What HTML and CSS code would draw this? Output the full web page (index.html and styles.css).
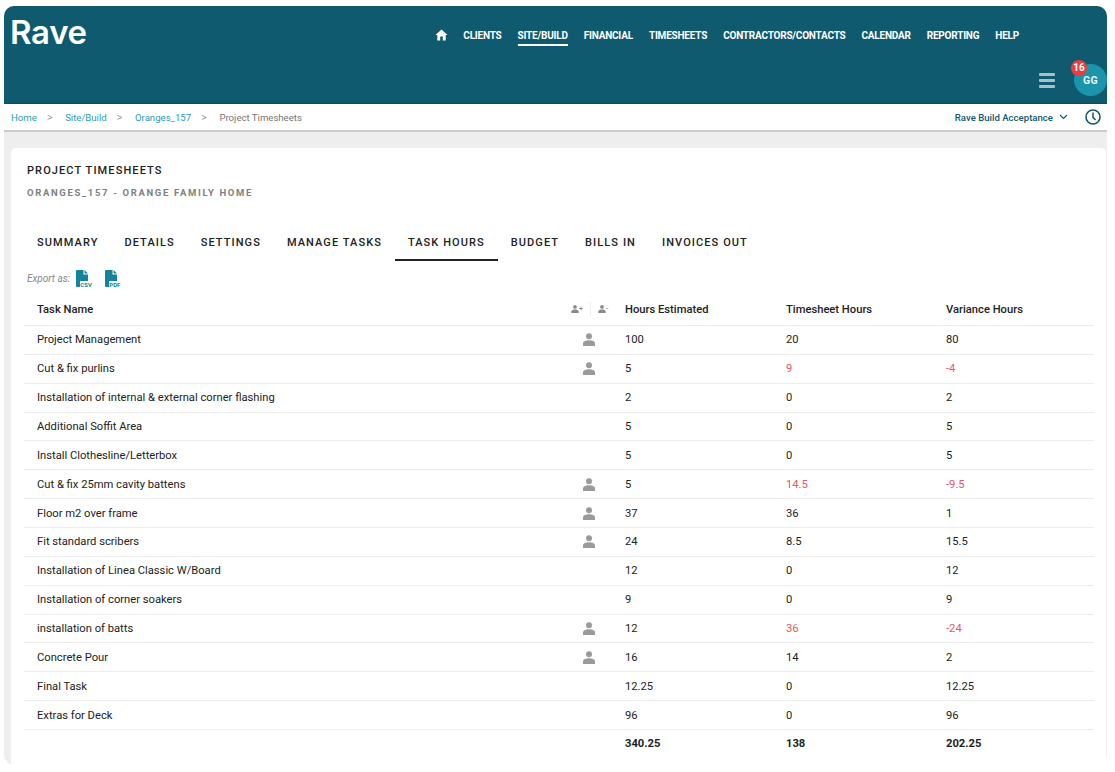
FILE: index.html
```html
<!DOCTYPE html>
<html lang="en">
<head>
    <meta charset="UTF-8">
    <meta name="viewport" content="width=device-width, initial-scale=1.0">
    <title>Project Timesheets</title>
    <link rel="stylesheet" href="styles.css">
</head>
<body>
    <div class="frame">
        <header class="topbar">
            <div class="logo">Rave</div>
            <nav class="main-nav">
                <a class="nav-home" href="#">
                    <svg width="13" height="12" viewBox="0 0 13 12"><path d="M6.5 0.5 L0.5 6 H2.3 V11.5 H5.2 V7.6 H7.8 V11.5 H10.7 V6 H12.5 Z" fill="#fff"/></svg>
                </a>
                <a href="#">CLIENTS</a>
                <a class="active" href="#">SITE/BUILD</a>
                <a href="#">FINANCIAL</a>
                <a href="#">TIMESHEETS</a>
                <a href="#">CONTRACTORS/CONTACTS</a>
                <a href="#">CALENDAR</a>
                <a href="#">REPORTING</a>
                <a href="#">HELP</a>
            </nav>
            <div class="user-tools">
                <div class="burger"><span></span><span></span><span></span></div>
                <div class="avatar">GG<span class="badge">16</span></div>
            </div>
        </header>

        <div class="crumbbar">
            <div class="crumbs">
                <a href="#">Home</a><i>&gt;</i>
                <a href="#">Site/Build</a><i>&gt;</i>
                <a href="#">Oranges_157</a><i>&gt;</i>
                <span>Project Timesheets</span>
            </div>
            <div class="crumb-right">
                <span class="tenant">Rave Build Acceptance</span>
                <svg class="chev" width="9" height="6" viewBox="0 0 9 6"><path d="M1 1 L4.5 4.5 L8 1" fill="none" stroke="#0f5a6e" stroke-width="1.2"/></svg>
                <svg class="clock" width="16" height="16" viewBox="0 0 16 16"><circle cx="8" cy="8" r="7" fill="none" stroke="#0f5a6e" stroke-width="1.6"/><path d="M8 3.6 V8.4 L10.6 11" fill="none" stroke="#0f5a6e" stroke-width="1.5"/></svg>
            </div>
        </div>

        <main class="content">
            <section class="card">
                <h1>PROJECT TIMESHEETS</h1>
                <h2>ORANGES_157 - ORANGE FAMILY HOME</h2>

                <div class="tabs">
                    <a href="#">SUMMARY</a>
                    <a href="#">DETAILS</a>
                    <a href="#">SETTINGS</a>
                    <a href="#">MANAGE TASKS</a>
                    <a class="active" href="#">TASK HOURS</a>
                    <a href="#">BUDGET</a>
                    <a href="#">BILLS IN</a>
                    <a href="#">INVOICES OUT</a>
                </div>

                <div class="export">
                    <em>Export as:</em>
                    <svg class="file-icon" width="16" height="17" viewBox="0 0 16 17"><path d="M1 0 H7.5 V4.5 H12 V11 H4 V17 H1 Q0 17 0 16 V1 Q0 0 1 0 Z M8.5 0 L12 3.5 H8.5 Z" fill="#16839b"/><text x="4.3" y="16.7" font-size="6" font-weight="700" fill="#16839b">CSV</text></svg>
                    <svg class="file-icon" width="16" height="17" viewBox="0 0 16 17"><path d="M1 0 H7.5 V4.5 H12 V11 H4 V17 H1 Q0 17 0 16 V1 Q0 0 1 0 Z M8.5 0 L12 3.5 H8.5 Z" fill="#16839b"/><text x="4.3" y="16.7" font-size="6" font-weight="700" fill="#16839b">PDF</text></svg>
                </div>

                <svg width="0" height="0" class="defs">
                    <symbol id="person" viewBox="0 0 12 13"><circle cx="6" cy="3.2" r="3"/><path d="M0 13 V10.6 C0 8.2 3 7.2 6 7.2 C9 7.2 12 8.2 12 10.6 V13 Z"/></symbol>
                </svg>

                <div class="task-table">
                    <div class="row head">
                        <div>Task Name</div>
                        <div class="assign-head">
                            <span class="mini"><svg width="8" height="8"><use href="#person"/></svg>+</span>
                            <span class="mini sep"><svg width="8" height="8"><use href="#person"/></svg>-</span>
                        </div>
                        <div>Hours Estimated</div>
                        <div>Timesheet Hours</div>
                        <div>Variance Hours</div>
                    </div>
                    <div class="row"><div>Project Management</div><div class="who"><svg width="12" height="13"><use href="#person"/></svg></div><div>100</div><div>20</div><div>80</div></div>
                    <div class="row"><div>Cut &amp; fix purlins</div><div class="who"><svg width="12" height="13"><use href="#person"/></svg></div><div>5</div><div class="over">9</div><div class="over">-4</div></div>
                    <div class="row"><div>Installation of internal &amp; external corner flashing</div><div class="who"></div><div>2</div><div>0</div><div>2</div></div>
                    <div class="row"><div>Additional Soffit Area</div><div class="who"></div><div>5</div><div>0</div><div>5</div></div>
                    <div class="row"><div>Install Clothesline/Letterbox</div><div class="who"></div><div>5</div><div>0</div><div>5</div></div>
                    <div class="row"><div>Cut &amp; fix 25mm cavity battens</div><div class="who"><svg width="12" height="13"><use href="#person"/></svg></div><div>5</div><div class="over">14.5</div><div class="over">-9.5</div></div>
                    <div class="row"><div>Floor m2 over frame</div><div class="who"><svg width="12" height="13"><use href="#person"/></svg></div><div>37</div><div>36</div><div>1</div></div>
                    <div class="row"><div>Fit standard scribers</div><div class="who"><svg width="12" height="13"><use href="#person"/></svg></div><div>24</div><div>8.5</div><div>15.5</div></div>
                    <div class="row"><div>Installation of Linea Classic W/Board</div><div class="who"></div><div>12</div><div>0</div><div>12</div></div>
                    <div class="row"><div>Installation of corner soakers</div><div class="who"></div><div>9</div><div>0</div><div>9</div></div>
                    <div class="row"><div>installation of batts</div><div class="who"><svg width="12" height="13"><use href="#person"/></svg></div><div>12</div><div class="over">36</div><div class="over">-24</div></div>
                    <div class="row"><div>Concrete Pour</div><div class="who"><svg width="12" height="13"><use href="#person"/></svg></div><div>16</div><div>14</div><div>2</div></div>
                    <div class="row"><div>Final Task</div><div class="who"></div><div>12.25</div><div>0</div><div>12.25</div></div>
                    <div class="row"><div>Extras for Deck</div><div class="who"></div><div>96</div><div>0</div><div>96</div></div>
                    <div class="row total"><div></div><div></div><div>340.25</div><div>138</div><div>202.25</div></div>
                </div>
            </section>
        </main>
    </div>
</body>
</html>
```

FILE: styles.css
```css
* {
    box-sizing: border-box;
    margin: 0;
    padding: 0;
}

html, body {
    height: 772px;
    overflow: hidden;
}

body {
    background: #fff;
    font-family: Roboto, 'Liberation Sans', sans-serif;
    color: #222;
}

a {
    text-decoration: none;
    color: inherit;
}

.frame {
    width: 1103px;
    height: 759px;
    margin: 6px 0 0 4px;
    border-radius: 10px;
    overflow: hidden;
    background: #eee;
    display: flex;
    flex-direction: column;
}

/* top bar */
.topbar {
    height: 98px;
    flex: none;
    background: #0f5a6e;
    border-bottom: 1px solid #0b4a5c;
    display: grid;
    grid-template-columns: 1fr auto;
    grid-template-rows: 46px 1fr;
    color: #fff;
}

.logo {
    grid-column: 1;
    grid-row: 1;
    font-family: Inter, Roboto, sans-serif;
    font-size: 33px;
    font-weight: 600;
    letter-spacing: -0.3px;
    line-height: 30px;
    padding: 11px 0 0 6px;
}

.main-nav {
    grid-column: 1 / 3;
    grid-row: 1;
    justify-self: end;
    display: flex;
    align-items: flex-start;
    gap: 16px;
    padding: 23px 88px 0 0;
    font-size: 10px;
    font-weight: 700;
    letter-spacing: -0.21px;
}

.main-nav a {
    line-height: 13px;
    height: 17px;
}

.main-nav a.active {
    border-bottom: 2px solid #fff;
}

.nav-home {
    margin-right: -1px;
}

.user-tools {
    grid-column: 2;
    grid-row: 2;
    display: flex;
    align-items: flex-start;
    gap: 19px;
    padding: 12px 0 0 0;
}

.burger {
    width: 16px;
    margin-top: 9px;
    display: flex;
    flex-direction: column;
    gap: 3.5px;
}

.burger span {
    height: 2.5px;
    background: #a5c0c8;
    border-radius: 1px;
}

.avatar {
    position: relative;
    width: 33px;
    height: 32px;
    border-radius: 50%;
    background: #1a95ac;
    font-size: 10.5px;
    font-weight: 700;
    letter-spacing: 0.3px;
    line-height: 33px;
    text-align: center;
    color: #e6f4f7;
}

.badge {
    position: absolute;
    left: -3px;
    top: -4px;
    width: 16px;
    height: 16px;
    border-radius: 50%;
    background: #ef3b3b;
    color: #fff;
    font-size: 10px;
    line-height: 15px;
    letter-spacing: 0;
}

/* breadcrumb */
.crumbbar {
    height: 28px;
    flex: none;
    background: #fff;
    border-bottom: 2px solid #ccc;
    display: flex;
    justify-content: space-between;
    align-items: center;
    padding: 0 6px 0 7px;
    font-size: 9.6px;
}

.crumbs a {
    color: #2b9db3;
}

.crumbs i {
    font-style: normal;
    font-size: 11px;
    font-weight: 300;
    color: #777;
    margin: 0 10.1px;
}

.crumbs span {
    color: #777;
}

.crumb-right {
    display: flex;
    align-items: center;
}

.tenant {
    color: #0f5a6e;
    font-weight: 500;
}

.chev {
    margin: 0 17px 0 6px;
}

/* card */
.content {
    flex: 1;
    padding: 16px 1px 0 7px;
}

.card {
    height: 100%;
    background: #fff;
    border-radius: 5px 5px 0 0;
    padding: 16px 12px 0 13px;
}

.card h1 {
    font-size: 11px;
    font-weight: 500;
    letter-spacing: 1.1px;
    line-height: 14px;
    color: #222;
    padding-left: 3px;
}

.card h2 {
    margin-top: 8px;
    font-size: 9.5px;
    font-weight: 700;
    letter-spacing: 1.65px;
    line-height: 13px;
    color: #808080;
    padding-left: 3px;
}

.tabs {
    display: flex;
    margin-top: 31px;
}

.tabs a {
    padding: 0 13px;
    height: 31px;
    line-height: 25px;
    font-size: 11px;
    font-weight: 500;
    letter-spacing: 1.08px;
    color: #222;
}

.tabs a.active {
    border-bottom: 2px solid #222;
}

.export {
    display: flex;
    align-items: flex-start;
    height: 34px;
    padding: 9px 0 0 3px;
}

.export em {
    font-size: 10px;
    color: #888;
    line-height: 17px;
    margin-right: 6px;
}

.file-icon {
    margin-right: 13px;
}

.file-icon text {
    font-family: Roboto, sans-serif;
}

.defs {
    position: absolute;
}

/* task table */
.task-table {
    display: grid;
    grid-template-rows: 31px repeat(15, 28.86px);
}

.row {
    display: grid;
    grid-template-columns: 548px 40px 161px 160px 1fr;
    align-items: center;
    border-bottom: 1px solid #ececec;
    font-size: 11.2px;
}

.row > div {
    padding-left: 13px;
}

.row.head {
    font-weight: 500;
    padding-bottom: 2px;
}

.row .who {
    padding-left: 11px;
    height: 13px;
    color: #9a9a9a;
    fill: #9a9a9a;
}

.row .assign-head {
    padding: 0;
    margin-left: -1px;
    display: flex;
    fill: #8a8a8a;
    color: #8a8a8a;
    font-size: 7px;
}

.mini {
    display: flex;
    align-items: center;
    width: 19px;
    height: 14px;
}

.mini.sep {
    border-left: 1px solid #eee;
    padding-left: 7px;
}

.over {
    color: #e8566a;
}

.row.total {
    font-weight: 700;
    border-bottom: 0;
    padding-bottom: 2px;
}
```
